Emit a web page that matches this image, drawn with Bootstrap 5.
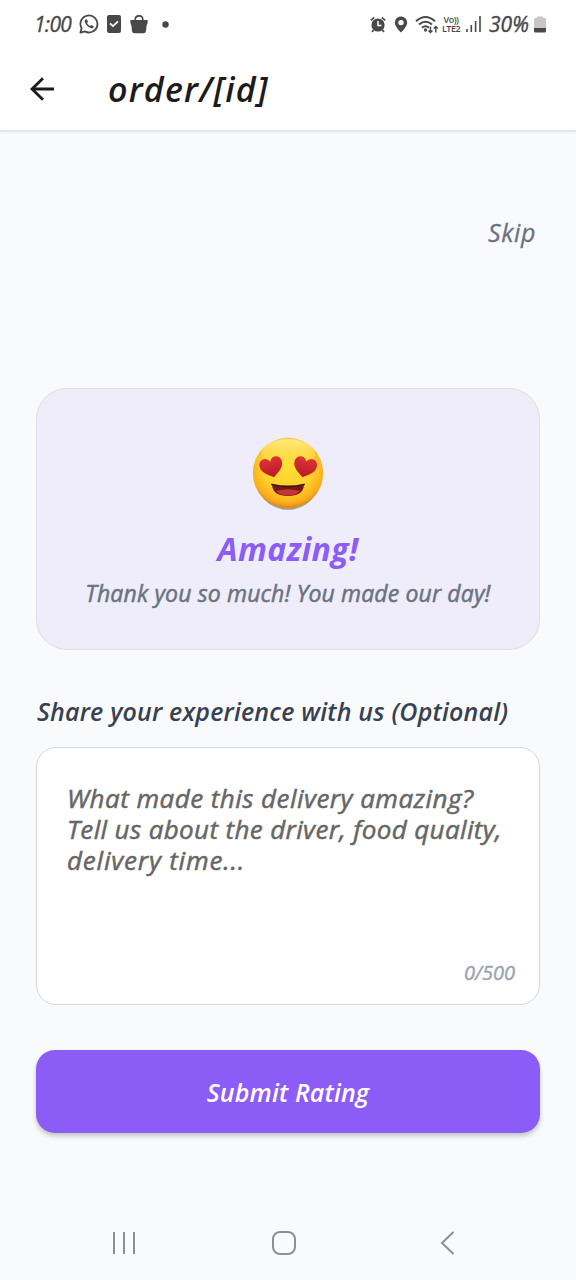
<!DOCTYPE html>
<html lang="en">
<head>
<meta charset="utf-8">
<meta name="viewport" content="width=device-width, initial-scale=1">
<title>Rate your order</title>
<link href="https://cdn.jsdelivr.net/npm/bootstrap@5.3.0/dist/css/bootstrap.min.css" rel="stylesheet">
<style>
  body { font-family: "Open Sans", "Noto Sans", sans-serif; font-style: italic; font-weight: 400; background: #f9fafc; color: #1c1c1e; min-height: 1280px; white-space: nowrap; }
  svg { display: block; flex: none; }
  .status-row { height: 48px; padding: 0 30px 0 34px; color: #484848; font-size: 21px; line-height: 48px; }
  .clock { width: 45px; letter-spacing: -.7px; -webkit-text-stroke: .3px; }
  .percent { width: 45px; letter-spacing: 0; -webkit-text-stroke: .4px; margin-left: 7px; }
  .network { width: 22px; font-style: normal; font-weight: 600; line-height: 9px; font-size: 9px; letter-spacing: -.5px; }
  .app-head { height: 132px; background: #fff; border-bottom: 2px solid #e4e6e9; box-shadow: 0 1px 3px #0000000a; }
  .title-row { height: 82px; padding-left: 29px; }
  .page-title { font-size: 34px; font-weight: 600; line-height: 40px; margin-left: 52px; letter-spacing: 1.2px; }
  .skip-link { font-size: 25px; line-height: 34px; color: #6b7280; padding: 83px 40px 2px 0; letter-spacing: .6px; -webkit-text-stroke: .3px; }
  .skip-link a { color: inherit; }
  .mood { height: 262px; margin: 137px 36px 0; padding-top: 48px; background: #efedfa; border: 1.5px solid #dfdde8; border-radius: 31px; }
  .mood-name { font-size: 32px; font-weight: 700; line-height: 42px; color: #8b5cf6; margin-top: 17px; letter-spacing: .4px; }
  .mood-text { font-size: 23px; line-height: 34px; color: #6b7280; margin-top: 6px; letter-spacing: .14px; -webkit-text-stroke: .5px; }
  .ask { font-size: 25px; font-weight: 600; line-height: 36px; color: #374151; margin: 43px 36px 0 37px; letter-spacing: .18px; }
  .note { height: 258px; margin: 18px 36px 0; padding: 35px 24px 16px 30px; background: #fff; border: 1.5px solid #d3d7dd; border-radius: 20px; }
  .hint { font-size: 26px; line-height: 31px; color: #666; -webkit-text-stroke: .5px; }
  .l1 { letter-spacing: .45px; }
  .l2 { letter-spacing: .36px; }
  .l3 { letter-spacing: .8px; }
  .count { font-size: 20px; line-height: 30px; color: #9ca3af; -webkit-text-stroke: .4px; }
  .send { height: 83px; margin: 45px 36px 0; padding-top: 8px; border: 0; border-radius: 19px; background: #8b5cf6; color: #fff; font-size: 25px; font-weight: 600; font-style: italic; letter-spacing: .15px; box-shadow: 0 3px 5px #00000038; }
  .send:hover { background: #7c4df0; color: #fff; }
  .keys { padding: 98px 121px 0 112px; color: #8e8f92; }
</style>
</head>
<body class="d-flex flex-column">
<header class="app-head">
  <div class="status-row d-flex align-items-center">
    <span class="clock">1:00</span>
    <svg width="20" height="20" viewBox="0 0 20 20"><path d="M1.4 18.6 2.6 14.2A8.5 8.5 0 1 1 5.9 17.4Z" fill="none" stroke="currentColor" stroke-width="1.8" stroke-linejoin="round"/><path d="M6.9 5.2c-.9.4-1.3 1.3-1.1 2.3.6 3.3 3.4 5.900 6.500 6.700 1.300.2 2.500-.7 2.500-2l-2.400-1.300-1.200 1.200c-1.400-.6-2.500-1.700-3.200-3.100l1-1.200-1-2.400Z" fill="currentColor"/></svg>
    <svg class="ms-2" width="14" height="18" viewBox="0 0 14 18"><rect width="14" height="18" rx="2" fill="currentColor"/><path d="m3 8.300 3 2.800 5-4.700" fill="none" stroke="#fff" stroke-width="1.800"/></svg>
    <svg style="margin-left:9px" width="18" height="19" viewBox="0 0 18 19"><path d="M5.300 6V4a3.700 3.200 0 0 1 7.400 0v2" fill="none" stroke="currentColor" stroke-width="1.700"/><path d="M1.200 5h15.600q1 0 1 1-.3 2.800-1.200 4.600L16 16q-.3 2.200-2.400 2.200H4.400Q2.300 18.200 2 16l-.6-5.400Q.5 8.800.2 6q0-1 1-1Z" fill="currentColor"/></svg>
    <svg style="margin-left:14px" width="7" height="7"><circle cx="3.500" cy="3.500" r="3.200" fill="currentColor"/></svg>
    <svg class="ms-auto" width="16" height="17" viewBox="0 0 16 17"><circle cx="8" cy="9" r="6.600" fill="currentColor"/><path d="M.8 4.400 4.200 1.400M15.200 4.400 11.800 1.400M3.500 14 2 16M12.500 14 14 16" stroke="currentColor" stroke-width="1.700"/><path d="M8 5v4.500h3.500" fill="none" stroke="#fff" stroke-width="1.500"/></svg>
    <svg style="margin-left:8px" width="14" height="17" viewBox="0 0 14 17"><path fill-rule="evenodd" d="M7 .5a6 6 0 0 0-6.200 6.200C.8 10.700 7 16.500 7 16.500s6.200-5.800 6.200-9.800A6 6 0 0 0 7 .5Zm0 3.400a2.700 2.700 0 1 1 0 5.400 2.700 2.700 0 0 1 0-5.400Z" fill="currentColor"/></svg>
    <svg style="margin-left:7px" width="25" height="19" viewBox="0 0 25 19" fill="none" stroke="currentColor" stroke-width="1.900"><path d="M1 6.200Q10.500-2.400 20 6.200M4 9.500q6.500-5.500 13 0M7 12.700q3.500-3 7 0"/><circle cx="10.500" cy="15" r=".7"/><path stroke-width="1.400" d="M15.500 11.500v6M13.500 15.600l2 2 2-2M20.800 17.500v-6M18.800 13.600l2-2 2 2"/></svg>
    <div class="network text-center"><div>Vo))</div><div>LTE2</div></div>
    <svg style="margin-left:4px" width="16" height="16" stroke="currentColor" stroke-width="1.600"><path d="M1 13v3M5.300 9v7M9.600 5v11M14 0v16"/></svg>
    <span class="percent">30%</span>
    <svg width="12" height="17" viewBox="0 0 12 17"><path d="M3 2V.5h6V2h1.500Q12 2 12 3.500V12H0V3.500Q0 2 1.500 2Z" fill="#c6c6c6"/><path d="M0 12h12v3q0 1.500-1.500 1.500h-9Q0 16.500 0 15Z" fill="currentColor"/></svg>
  </div>
  <div class="title-row d-flex align-items-center">
    <svg width="27" height="26" viewBox="0 0 27 26"><path d="M25 13H3M14 2.200 3 13l11 10.800" fill="none" stroke="currentColor" stroke-width="2.800"/></svg>
    <h1 class="page-title mb-0">order/[id]</h1>
  </div>
</header>
<main class="d-flex flex-column">
  <div class="skip-link text-end"><a href="#" class="text-decoration-none">Skip</a></div>
  <section class="mood d-flex flex-column align-items-center">
    <svg width="72" height="74" viewBox="0 0 72 74">
      <defs>
        <radialGradient id="face" cx=".5" cy=".4" r=".6"><stop offset="0" stop-color="#ffdf36"/><stop offset=".6" stop-color="#ffd02c"/><stop offset=".88" stop-color="#f9ad1d"/><stop offset="1" stop-color="#d9870f"/></radialGradient>
        <linearGradient id="shine" x2="0" y2="1"><stop stop-color="#fff5a8" stop-opacity=".7"/><stop offset="1" stop-color="#ffe14b" stop-opacity="0"/></linearGradient>
        <linearGradient id="love" x2="0" y2="1"><stop stop-color="#dd3238"/><stop offset="1" stop-color="#b91a26"/></linearGradient>
        <path id="heart" d="M0 10.500C-5 7-11.500 3.500-11.500-3c0-7 8.500-9 11.500-2.500C3-12 11.500-10 11.500-3 11.500 3.500 5 7 0 10.500Z"/>
      </defs>
      <ellipse cx="36" cy="38.500" rx="33" ry="34.500" fill="#55402b" opacity=".45"/>
      <circle cx="36" cy="36" r="35.200" fill="url(#face)"/>
      <ellipse cx="36" cy="17" rx="27" ry="15" fill="url(#shine)"/>
      <use href="#heart" transform="translate(19.500 30) rotate(-14)" fill="url(#love)"/>
      <use href="#heart" transform="translate(53 30) rotate(14)" fill="url(#love)"/>
      <path d="M20 48q16 3 32 0-1 11-16 11T20 48Z" fill="#7c1517"/>
      <path d="M24 54q12-3.500 24 0-4 4.500-12 4.500T24 54Z" fill="#c23532"/>
      <path d="M20 47.500q16 4 32 0" fill="none" stroke="#35170b" stroke-width="1.800" stroke-linecap="round"/>
    </svg>
    <h2 class="mood-name mb-0">Amazing!</h2>
    <p class="mood-text mb-0">Thank you so much! You made our day!</p>
  </section>
  <p class="ask mb-0">Share your experience with us (Optional)</p>
  <div class="note d-flex flex-column justify-content-between">
    <div class="hint"><span class="l1">What made this delivery amazing?</span><br><span class="l2">Tell us about the driver, food quality,</span><br><span class="l3">delivery time...</span></div>
    <div class="count text-end">0/500</div>
  </div>
  <button type="button" class="btn send">Submit Rating</button>
</main>
<nav class="keys d-flex justify-content-between align-items-center">
  <svg width="24" height="24" stroke="currentColor" stroke-width="2"><path d="M2 1v22M12 1v22M22 1v22"/></svg>
  <svg class="me-2" width="24" height="24" fill="none" stroke="currentColor" stroke-width="2"><rect x="1" y="1" width="22" height="22" rx="7"/></svg>
  <svg width="15" height="24" fill="none" stroke="currentColor" stroke-width="2"><path d="M13.500 1 2 12l11.500 11"/></svg>
</nav>
<script src="https://cdn.jsdelivr.net/npm/bootstrap@5.3.0/dist/js/bootstrap.bundle.min.js"></script>
</body>
</html>
